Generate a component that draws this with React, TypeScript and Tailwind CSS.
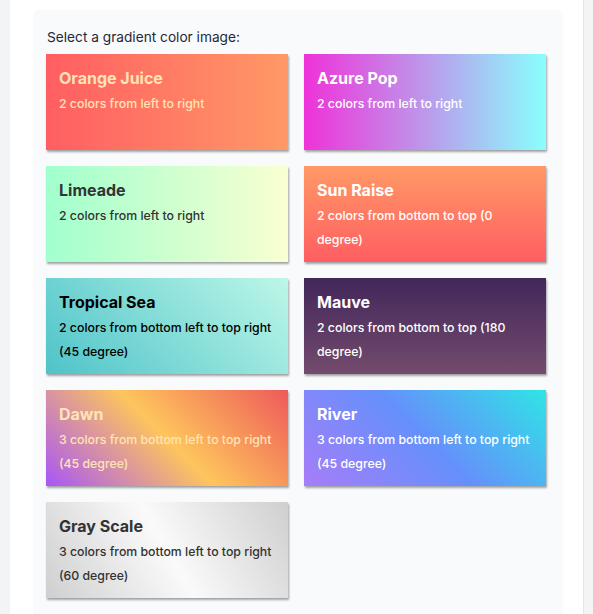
import React from "react";

type Item = { title: string; desc: string; bg: string; text: string };

const items: Item[] = [
  { title: "Orange Juice", desc: "2 colors from left to right", bg: "bg-[linear-gradient(to_right,#ff5e62,#ff9966)]", text: "text-[#ffe4b5]" },
  { title: "Azure Pop", desc: "2 colors from left to right", bg: "bg-[linear-gradient(to_right,#ef32d9,#89fffd)]", text: "text-white" },
  { title: "Limeade", desc: "2 colors from left to right", bg: "bg-[linear-gradient(to_right,#a1ffce,#faffd1)]", text: "text-[#333333]" },
  { title: "Sun Raise", desc: "2 colors from bottom to top (0 degree)", bg: "bg-[linear-gradient(0deg,#ff5e62,#ff9966)]", text: "text-white" },
  { title: "Tropical Sea", desc: "2 colors from bottom left to top right (45 degree)", bg: "bg-[linear-gradient(45deg,#4ec3c9,#bdf7e8)]", text: "text-black" },
  { title: "Mauve", desc: "2 colors from bottom to top (180 degree)", bg: "bg-[linear-gradient(180deg,#42275a,#734b6d)]", text: "text-white" },
  { title: "Dawn", desc: "3 colors from bottom left to top right (45 degree)", bg: "bg-[linear-gradient(45deg,#a855f7,#fec55c,#ee5a5a)]", text: "text-[#ffe4b5]" },
  { title: "River", desc: "3 colors from bottom left to top right (45 degree)", bg: "bg-[linear-gradient(45deg,#a77df8,#6590fb,#2fe4e6)]", text: "text-white" },
  { title: "Gray Scale", desc: "3 colors from bottom left to top right (60 degree)", bg: "bg-[linear-gradient(60deg,#cfcfcf,#fafafa,#cfcfcf)]", text: "text-[#333333]" },
];

export default function App() {
  return (
    <div className="min-h-[614px] bg-[#f3f4f6] pl-[10px] pr-[9px] font-['Inter','Liberation_Sans',sans-serif]">
      <div className="min-h-[614px] bg-white border-r border-[#e5e7eb] pl-[23px] pr-[20px] pt-[10px]">
        <div className="bg-[#f8fafc] rounded-t-md min-h-[604px] pl-[13px] pt-[17px] pb-4">
          <div className="text-[13.7px] leading-5 text-[#1f2937] mb-[7px] pl-px">Select a gradient color image:</div>
          <div className="grid grid-cols-[242px_242px] gap-4">
            {items.map((it) => (
              <div
                key={it.title}
                className={`${it.bg} ${it.text} h-[96px] pl-[13px] pr-3 py-3 shadow-[1px_2px_2px_rgba(0,0,0,0.35)]`}
              >
                <div className="text-[16px] font-bold leading-6 mb-[2px]">{it.title}</div>
                <div className="text-[12.3px] font-medium leading-6">{it.desc}</div>
              </div>
            ))}
          </div>
        </div>
      </div>
    </div>
  );
}
